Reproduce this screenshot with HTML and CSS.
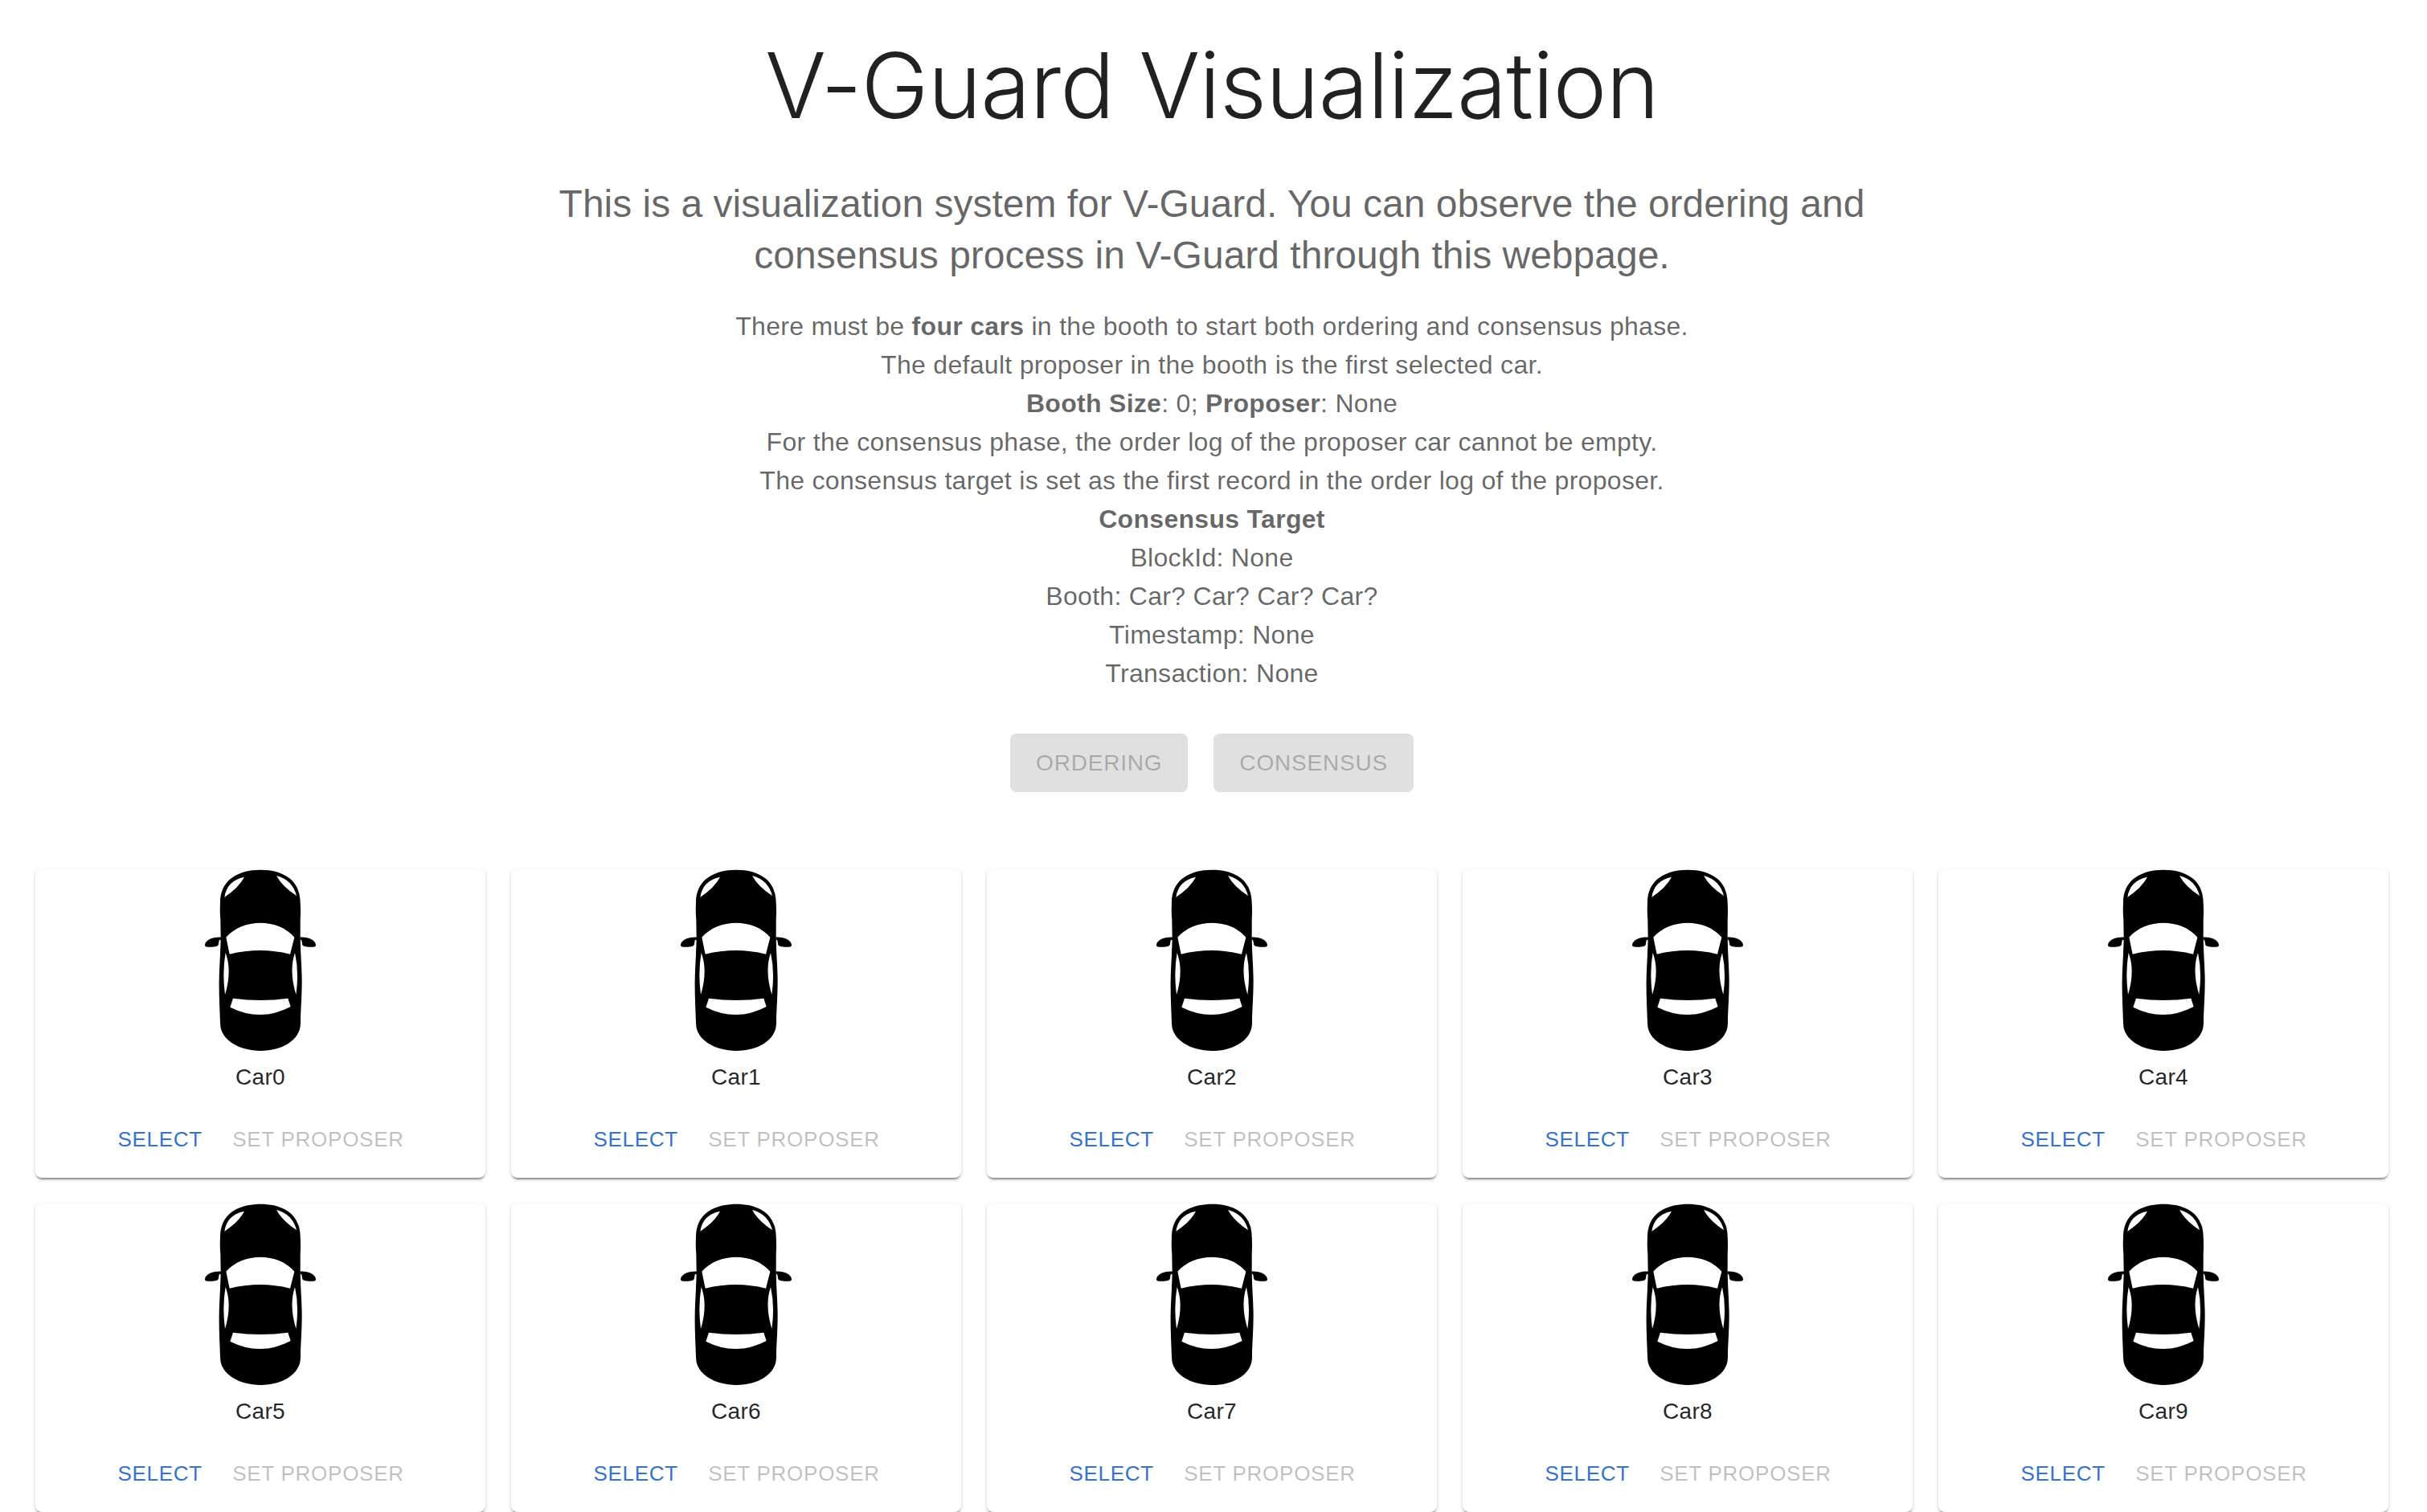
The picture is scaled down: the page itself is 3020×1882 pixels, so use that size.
FILE: index.html
```html
<!DOCTYPE html>
<html lang="en">
<head>
<meta charset="utf-8">
<title>V-Guard Visualization</title>
<link rel="stylesheet" href="styles.css">
</head>
<body>
<svg class="sprite" aria-hidden="true">
  <symbol id="car" viewBox="72 36 420 684">
    <path fill-rule="evenodd" d="M283 38C365 38 431 75 431 160Q433 190 431 225L431 290C432 350 437 410 437 450C437 520 432 560 432 610C432 675 362 714 283 714C205 714 132 675 132 610C130 550 127 500 128 450C129 400 133 350 134 290L133 225Q130 190 132 160C132 75 200 38 283 38ZM154 290C215 218 350 218 409 290L393 353Q281 325 167 353ZM180 518Q283 532 385 518L395 549Q283 608 169 551ZM152 348Q177 415 150 504Q139 420 152 348ZM411 348Q388 415 415 504Q427 420 411 348ZM222 65Q157 78 148 140Q200 106 222 65ZM342 60Q402 76 417 135Q364 101 342 60Z"/>
    <path d="M135 290C105 288 75 300 75 320Q76 327 95 326Q115 327 123 322Q127 317 127 307L129 299L135 301Z"/>
    <path d="M430 290C460 288 489 300 489 320Q488 327 470 326Q450 327 441 322Q437 317 437 307L435 299L430 301Z"/>
  </symbol>
</svg>
<main class="page">
  <header class="intro">
    <h1 class="title">V-Guard Visualization</h1>
    <p class="subtitle">This is a visualization system for V-Guard. You can observe the ordering and consensus process in V-Guard through this webpage.</p>
    <div class="details">
      <p>There must be <b>four cars</b> in the booth to start both ordering and consensus phase.</p>
      <p>The default proposer in the booth is the first selected car.</p>
      <p><b>Booth Size</b>: 0; <b>Proposer</b>: None</p>
      <p>For the consensus phase, the order log of the proposer car cannot be empty.</p>
      <p>The consensus target is set as the first record in the order log of the proposer.</p>
      <p><b>Consensus Target</b></p>
      <p>BlockId: None</p>
      <p>Booth: Car? Car? Car? Car?</p>
      <p>Timestamp: None</p>
      <p>Transaction: None</p>
    </div>
    <div class="phases">
      <button class="button contained" type="button" disabled>ORDERING</button>
      <button class="button contained" type="button" disabled>CONSENSUS</button>
    </div>
  </header>
  <section class="cars" aria-label="Cars">
    <article class="card"><svg class="car" aria-hidden="true"><use href="#car"/></svg><h2 class="name">Car0</h2><div class="actions"><button class="button small" type="button">SELECT</button><button class="button small" type="button" disabled>SET PROPOSER</button></div></article>
    <article class="card"><svg class="car" aria-hidden="true"><use href="#car"/></svg><h2 class="name">Car1</h2><div class="actions"><button class="button small" type="button">SELECT</button><button class="button small" type="button" disabled>SET PROPOSER</button></div></article>
    <article class="card"><svg class="car" aria-hidden="true"><use href="#car"/></svg><h2 class="name">Car2</h2><div class="actions"><button class="button small" type="button">SELECT</button><button class="button small" type="button" disabled>SET PROPOSER</button></div></article>
    <article class="card"><svg class="car" aria-hidden="true"><use href="#car"/></svg><h2 class="name">Car3</h2><div class="actions"><button class="button small" type="button">SELECT</button><button class="button small" type="button" disabled>SET PROPOSER</button></div></article>
    <article class="card"><svg class="car" aria-hidden="true"><use href="#car"/></svg><h2 class="name">Car4</h2><div class="actions"><button class="button small" type="button">SELECT</button><button class="button small" type="button" disabled>SET PROPOSER</button></div></article>
    <article class="card"><svg class="car" aria-hidden="true"><use href="#car"/></svg><h2 class="name">Car5</h2><div class="actions"><button class="button small" type="button">SELECT</button><button class="button small" type="button" disabled>SET PROPOSER</button></div></article>
    <article class="card"><svg class="car" aria-hidden="true"><use href="#car"/></svg><h2 class="name">Car6</h2><div class="actions"><button class="button small" type="button">SELECT</button><button class="button small" type="button" disabled>SET PROPOSER</button></div></article>
    <article class="card"><svg class="car" aria-hidden="true"><use href="#car"/></svg><h2 class="name">Car7</h2><div class="actions"><button class="button small" type="button">SELECT</button><button class="button small" type="button" disabled>SET PROPOSER</button></div></article>
    <article class="card"><svg class="car" aria-hidden="true"><use href="#car"/></svg><h2 class="name">Car8</h2><div class="actions"><button class="button small" type="button">SELECT</button><button class="button small" type="button" disabled>SET PROPOSER</button></div></article>
    <article class="card"><svg class="car" aria-hidden="true"><use href="#car"/></svg><h2 class="name">Car9</h2><div class="actions"><button class="button small" type="button">SELECT</button><button class="button small" type="button" disabled>SET PROPOSER</button></div></article>
  </section>
</main>
</body>
</html>
```
FILE: styles.css
```css
* {
  box-sizing: border-box;
}

body {
  margin: 0;
  background: #fff;
  color: rgba(0, 0, 0, 0.87);
  font-family: "Helvetica Neue", "Liberation Sans", Arial, sans-serif;
}

h1,
h2,
p {
  margin: 0;
}

.sprite {
  display: none;
}

.page {
  padding: 34px 48px 0 44px;
}

.intro {
  max-width: 1704px;
  margin: 0 auto;
  text-align: center;
}

.title {
  font-family: Inter, "Liberation Sans", sans-serif;
  font-size: 113px;
  font-weight: 300;
  line-height: 144px;
  letter-spacing: -0.00833em;
}

.subtitle {
  margin-top: 44px;
  color: rgba(0, 0, 0, 0.6);
  font-size: 48px;
  line-height: 64px;
}

.details {
  margin-top: 32px;
  color: rgba(0, 0, 0, 0.6);
  font-size: 32px;
  line-height: 48px;
  letter-spacing: 0.00938em;
}

.phases {
  display: flex;
  justify-content: center;
  gap: 32px;
  margin-top: 51px;
}

.button {
  border: 0;
  border-radius: 8px;
  background: transparent;
  color: #3473cd;
  font-family: inherit;
  letter-spacing: 0.02857em;
}

.button:disabled {
  color: rgba(0, 0, 0, 0.26);
}

.contained {
  padding: 12px 32px;
  font-size: 28px;
  line-height: 49px;
}

.contained:disabled {
  background: #e0e0e0;
}

.small {
  min-width: 128px;
  padding: 8px 10px;
  font-size: 26px;
  line-height: 46px;
}

.cars {
  display: grid;
  grid-template-columns: repeat(5, 1fr);
  gap: 32px;
  margin-top: 96px;
}

.card {
  display: flex;
  flex-direction: column;
  align-items: center;
  border-radius: 8px;
  background: #fff;
  box-shadow: 0 4px 2px -2px rgba(0, 0, 0, 0.28), 0 2px 2px rgba(0, 0, 0, 0.14), 0 2px 6px rgba(0, 0, 0, 0.12);
}

.car {
  width: 140px;
  height: 228px;
}

.name {
  margin: 11px 0 10px;
  font-size: 28px;
  font-weight: 400;
  line-height: 40px;
  letter-spacing: 0.01071em;
}

.actions {
  display: flex;
  gap: 16px;
  padding: 16px 16px 17px;
}
```
